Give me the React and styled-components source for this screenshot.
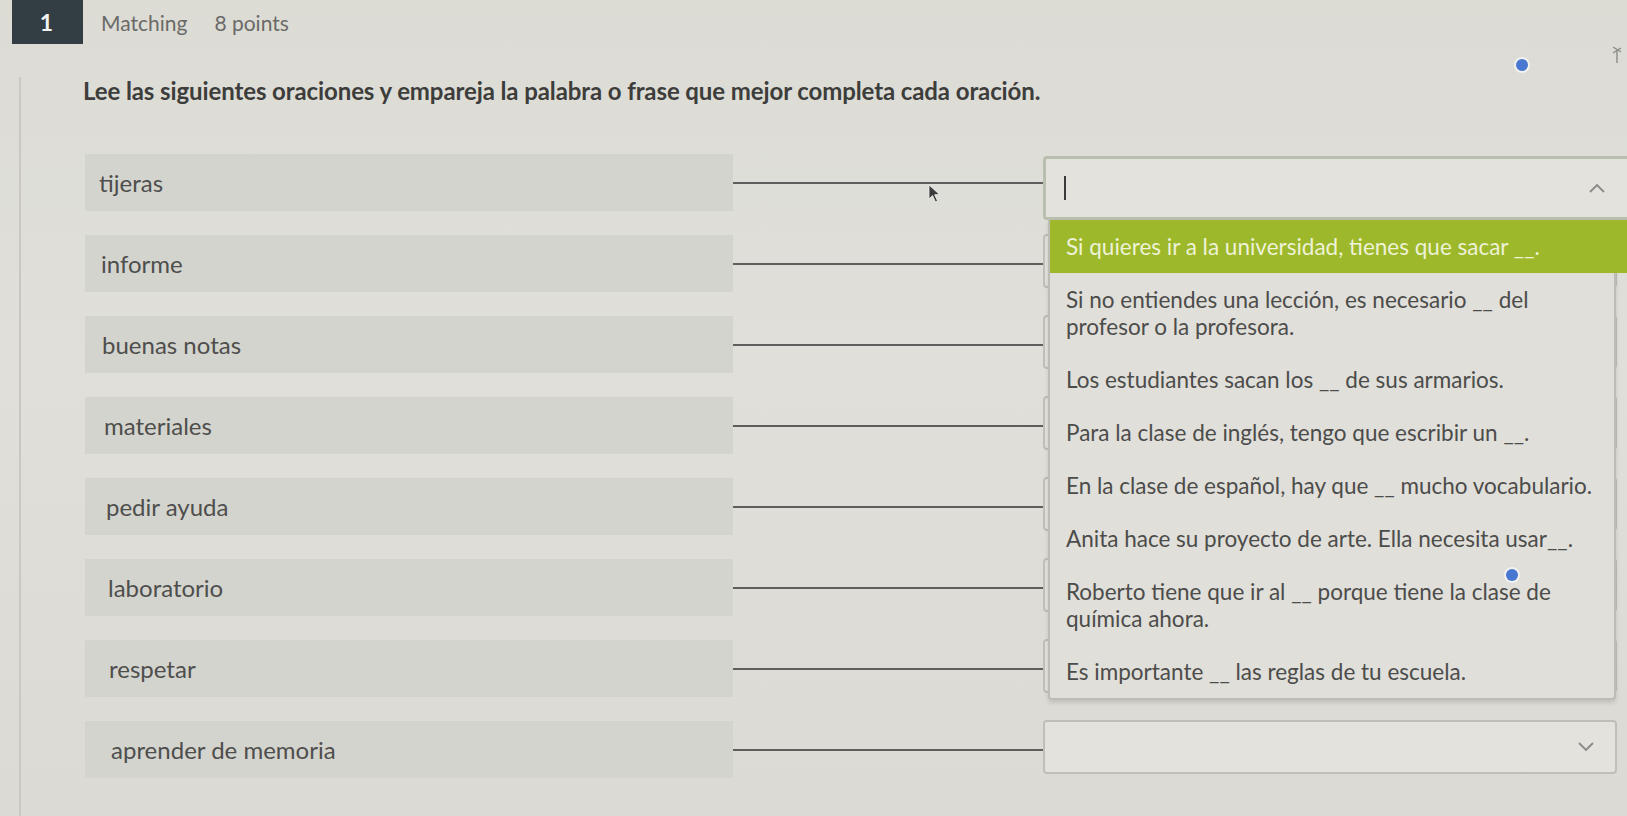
import React from 'react';
import styled, { createGlobalStyle } from 'styled-components';

const GlobalStyle = createGlobalStyle`
  html, body {
    margin: 0;
    padding: 0;
    background: #dddcd6;
    font-family: Lato, "Open Sans", "Liberation Sans", sans-serif;
    color: #4c4c4a;
    overflow: hidden;
  }
`;

const Page = styled.div`
  position: relative;
  width: 1627px;
  height: 816px;
  overflow: hidden;
  background: linear-gradient(180deg, #dcdcd5 0%, #e0dfda 45%, #dbdad5 100%);
`;

const Header = styled.div`
  display: flex;
  align-items: center;
  height: 44px;
  padding-left: 12px;
`;

const NumberBadge = styled.div`
  width: 71px;
  height: 44px;
  background: #323d44;
  color: #f2f2f2;
  font-weight: 700;
  font-size: 23px;
  display: flex;
  align-items: center;
  justify-content: center;
  padding-right: 2px;
  box-sizing: border-box;
`;

const HeaderText = styled.span`
  font-size: 21px;
  color: #6a6a68;
  margin-left: ${(p) => p.gap}px;
`;

const Question = styled.div`
  margin-left: 19px;
  border-left: 2px solid #c9c8c2;
  padding-left: 62px;
  height: 772px;
`;

const Prompt = styled.p`
  margin: 33px 0 0;
  font-size: 24px;
  line-height: 28px;
  font-weight: 700;
  color: #3d3d3b;
  letter-spacing: -0.1px;
`;

const Matches = styled.div`
  display: flex;
  flex-direction: column;
  gap: 24px;
  margin-top: 49px;
  margin-left: 2px;
`;

const Row = styled.div`
  display: flex;
  align-items: center;
  height: 57px;
`;

const Term = styled.div`
  flex: none;
  width: 648px;
  height: 57px;
  box-sizing: border-box;
  padding-left: ${(p) => 14 + p.shift}px;
  display: flex;
  align-items: center;
  background: #d4d4cf;
  font-size: 24px;
  color: #4e4e4c;
`;

const Connector = styled.div`
  flex: none;
  width: 310px;
  height: 2px;
  background: #5e5e5c;
`;

const Select = styled.div`
  position: relative;
  flex: none;
  width: ${(p) => (p.open ? 590 : 574)}px;
  height: ${(p) => (p.open ? 64 : 54)}px;
  align-self: ${(p) => (p.open ? 'flex-start' : 'center')};
  margin-top: ${(p) => (p.open ? 2 : -6)}px;
  box-sizing: border-box;
  border: ${(p) => (p.open ? '3px solid #b9bfae' : '2px solid #bfbeb8')};
  border-radius: 4px;
  background: #e3e2dd;
  display: flex;
  align-items: center;
  padding: 0 18px;
`;

const Caret = styled.span`
  width: 2px;
  height: 24px;
  background: #3a3a3a;
`;

const Chevron = styled.svg`
  position: absolute;
  right: ${(p) => p.right}px;
  top: 50%;
  transform: translateY(-50%);
`;

const Menu = styled.ul`
  position: absolute;
  top: 100%;
  left: 2px;
  width: 568px;
  box-sizing: border-box;
  margin: 3px 0 0;
  padding: 0;
  list-style: none;
  background: #e0dfda;
  border: 2px solid #bdbcb6;
  border-top: none;
  border-radius: 0 0 4px 4px;
  box-shadow: 0 3px 4px rgba(0, 0, 0, 0.12);
  z-index: 2;
`;

const Option = styled.li`
  padding: 13px 4px 13px 16px;
  margin-right: ${(p) => (p.active ? -14 : 0)}px;
  font-size: 22.5px;
  line-height: 27px;
  color: ${(p) => (p.active ? '#eef2d6' : '#4c4c4a')};
  background: ${(p) => (p.active ? '#9db82b' : 'transparent')};
`;

const Dot = styled.span`
  position: absolute;
  left: ${(p) => p.x - 6}px;
  top: ${(p) => p.y - 6}px;
  width: 12px;
  height: 12px;
  border-radius: 50%;
  background: #4a77cf;
  box-shadow: 0 0 0 2px rgba(255, 255, 255, 0.6);
  z-index: 5;
`;

const Pointer = styled.svg`
  position: absolute;
  left: 928px;
  top: 184px;
  z-index: 5;
`;

const Pin = styled.svg`
  position: absolute;
  left: 1609px;
  top: 44px;
`;

const terms = [
  'tijeras',
  'informe',
  'buenas notas',
  'materiales',
  'pedir ayuda',
  'laboratorio',
  'respetar',
  'aprender de memoria',
];

const sentences = [
  'Si quieres ir a la universidad, tienes que sacar __.',
  'Si no entiendes una lección, es necesario __ del profesor o la profesora.',
  'Los estudiantes sacan los __ de sus armarios.',
  'Para la clase de inglés, tengo que escribir un __.',
  'En la clase de español, hay que __ mucho vocabulario.',
  'Anita hace su proyecto de arte. Ella necesita usar__.',
  'Roberto tiene que ir al __ porque tiene la clase de química ahora.',
  'Es importante __ las reglas de tu escuela.',
];

const ChevronUp = () => (
  <Chevron right={24} width="18" height="12" viewBox="0 0 18 12">
    <path d="M2 10 L9 3 L16 10" fill="none" stroke="#8a8a86" strokeWidth="1.8" />
  </Chevron>
);

const ChevronDown = () => (
  <Chevron right={20} width="18" height="12" viewBox="0 0 18 12">
    <path d="M2 2 L9 9 L16 2" fill="none" stroke="#8a8a86" strokeWidth="1.8" />
  </Chevron>
);

const App = () => {
  return (
    <Page>
      <GlobalStyle />
      <Header>
        <NumberBadge>1</NumberBadge>
        <HeaderText gap={18}>Matching</HeaderText>
        <HeaderText gap={27}>8 points</HeaderText>
      </Header>
      <Question>
        <Prompt>
          Lee las siguientes oraciones y empareja la palabra o frase que mejor completa cada oración.
        </Prompt>
        <Matches>
          {terms.map((term, i) => (
            <Row key={term}>
              <Term shift={Math.round(i * 1.7)}>{term}</Term>
              <Connector />
              {i === 0 ? (
                <Select open>
                  <Caret />
                  <ChevronUp />
                  <Menu>
                    {sentences.map((s, j) => (
                      <Option key={s} active={j === 0}>
                        {s}
                      </Option>
                    ))}
                  </Menu>
                </Select>
              ) : (
                <Select>
                  <ChevronDown />
                </Select>
              )}
            </Row>
          ))}
        </Matches>
      </Question>

      <Dot x={1522} y={65} />
      <Dot x={1512} y={575} />
      <Pointer width="14" height="20" viewBox="0 0 14 20">
        <path d="M1 1 L1 15 L4.5 11.5 L7.5 18 L9.5 17 L6.6 10.7 L11.5 10.5 Z" fill="#3a3a3a" stroke="#eee" strokeWidth="0.8" />
      </Pointer>
      <Pin width="16" height="22" viewBox="0 0 16 22">
        <path d="M4 3 L12 8 M4 9 L12 4 M8 6 L8 19" fill="none" stroke="#8c8c88" strokeWidth="1.4" />
      </Pin>
    </Page>
  );
};

export default App;
